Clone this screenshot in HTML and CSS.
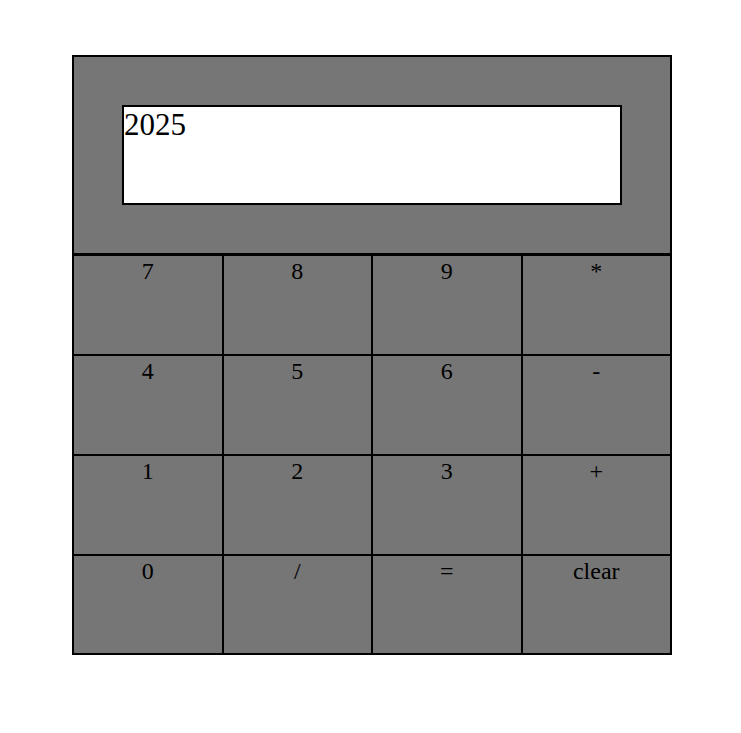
FILE: index.html
```html
<!DOCTYPE html>
<html>
  <head>
    <title>Calculator</title>
    <link rel="stylesheet" href="styles.css">
  </head>
  <body>
    <div id="calculator">
      <div id="display-area">
        <div id="display">2025</div>
      </div>
      <div id="keys">
        <div class="key">7</div>
        <div class="key">8</div>
        <div class="key">9</div>
        <div class="key">*</div>
        <div class="key">4</div>
        <div class="key">5</div>
        <div class="key">6</div>
        <div class="key">-</div>
        <div class="key">1</div>
        <div class="key">2</div>
        <div class="key">3</div>
        <div class="key">+</div>
        <div class="key">0</div>
        <div class="key">/</div>
        <div class="key">=</div>
        <div class="key">clear</div>
      </div>
    </div>
  </body>
</html>
```

FILE: styles.css
```css
body { margin: 0; font-family: "Liberation Serif", "Times New Roman", serif; color: #000; background: #fff; }

#calculator {
  width: 600px;
  box-sizing: border-box;
  margin: 55px 0 0 72px;
  border: 2px solid #000;
  background: #767676;
}

#display-area {
  height: 199px;
  box-sizing: border-box;
  padding: 48px 0 0 48px;
  border-bottom: 3px solid #000;
}

#display {
  width: 500px;
  height: 100px;
  box-sizing: border-box;
  border: 2px solid #000;
  background: #fff;
  font-size: 31px;
  line-height: 35px;
}

#keys {
  display: grid;
  grid-template-columns: repeat(4, 1fr);
  grid-template-rows: 98px 98px 98px 97px;
  gap: 2px;
  background: #000;
}

.key {
  background: #767676;
  padding-top: 2px;
  text-align: center;
  font-size: 24px;
  line-height: 27px;
}
```
